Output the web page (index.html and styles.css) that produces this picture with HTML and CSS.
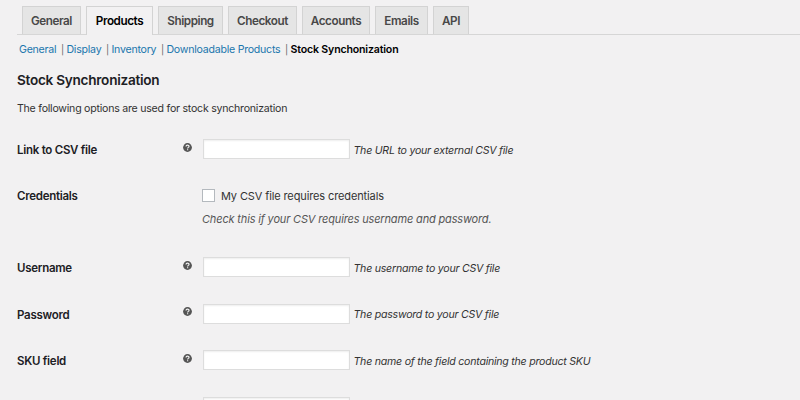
FILE: index.html
```html
<!DOCTYPE html>
<html lang="en">
<head>
<meta charset="utf-8">
<title>Stock Synchronization</title>
<link rel="stylesheet" href="styles.css">
</head>
<body>
<svg class="defs" width="0" height="0" aria-hidden="true">
  <symbol id="help" viewBox="0 0 9 9">
    <circle cx="4.5" cy="4.5" r="4.4" fill="#555"/>
    <path d="M3 3.5C3.1 1.7 6 1.7 6 3.4C6 4.4 4.6 4.4 4.6 5.5M4.6 6.2V7.3" fill="none" stroke="#f1f1f1" stroke-width="1.2"/>
  </symbol>
</svg>
<nav class="tabs">
  <a class="tab general">General</a>
  <a class="tab products active">Products</a>
  <a class="tab shipping">Shipping</a>
  <a class="tab checkout">Checkout</a>
  <a class="tab accounts">Accounts</a>
  <a class="tab emails">Emails</a>
  <a class="tab api">API</a>
</nav>
<main>
  <ul class="subnav">
    <li><a>General</a></li>
    <li><a>Display</a></li>
    <li><a>Inventory</a></li>
    <li><a>Downloadable Products</a></li>
    <li><a class="current">Stock Synchonization</a></li>
  </ul>
  <h2>Stock Synchronization</h2>
  <p class="intro">The following options are used for stock synchronization</p>
  <form class="fields">
    <div class="row">
      <label>Link to CSV file</label><svg class="help"><use href="#help"/></svg>
      <input type="text"><span class="description">The URL to your external CSV file</span>
    </div>
    <div class="row credentials">
      <label>Credentials</label>
      <div class="choice">
        <div class="check"><input type="checkbox"><span>My CSV file requires credentials</span></div>
        <p>Check this if your CSV requires username and password.</p>
      </div>
    </div>
    <div class="row">
      <label>Username</label><svg class="help"><use href="#help"/></svg>
      <input type="text"><span class="description">The username to your CSV file</span>
    </div>
    <div class="row">
      <label>Password</label><svg class="help"><use href="#help"/></svg>
      <input type="text"><span class="description">The password to your CSV file</span>
    </div>
    <div class="row">
      <label>SKU field</label><svg class="help"><use href="#help"/></svg>
      <input type="text"><span class="description">The name of the field containing the product SKU</span>
    </div>
    <div class="row">
      <label></label><span class="help"></span>
      <input type="text">
    </div>
  </form>
</main>
</body>
</html>
```
FILE: styles.css
```css
* { box-sizing: border-box; }
html, body { height: 100%; overflow: hidden; }
body {
  margin: 0;
  background: #f2f1f2;
  color: #333;
  font-family: Inter, "Open Sans", sans-serif;
  font-size: 10.6px;
  letter-spacing: -0.24px;
}
.defs { display: block; }
.tabs {
  display: flex;
  gap: 5px;
  height: 35px;
  margin-left: 17px;
  padding: 6px 0 0 5px;
  border-bottom: 1px solid #d6d6d6;
}
.tab {
  height: 28px;
  border: 1px solid #d3d3d3;
  border-bottom: 0;
  background: #e5e5e5;
  color: #484848;
  font-size: 11.7px;
  font-weight: 600;
  line-height: 28px;
  text-align: center;
  white-space: nowrap;
  letter-spacing: -0.43px;
}
.tab.active { height: 29px; background: #f2f1f2; color: #000; }
.general { width: 59px; }
.products { width: 67px; }
.shipping { width: 65px; }
.checkout { width: 69px; }
.accounts { width: 68px; }
.emails { width: 53px; }
.api { width: 36px; }
main { height: 365px; padding: 0 17px; overflow: hidden; }
.subnav {
  display: flex;
  height: 29px;
  margin: 0;
  padding: 0 0 0 2px;
  list-style: none;
  line-height: 29px;
  color: #666;
  white-space: nowrap;
}
.subnav li:not(:first-child)::before { content: "|"; margin: 0 2.5px 0 4.7px; font-size: 9.5px; }
.subnav a { color: #1a76ad; }
.subnav .current { color: #000; font-weight: 600; letter-spacing: -0.17px; }
h2 { margin: 6px 0 0; font-size: 13.6px; line-height: 20px; font-weight: 600; color: #1c2024; letter-spacing: -0.27px; }
.intro { margin: 11px 0 0; line-height: 16px; }
.fields { margin-top: 22px; }
.row { display: flex; align-items: center; height: 20.7px; margin-bottom: 26px; }
.row label { width: 166px; padding-top: 2px; font-size: 11.5px; font-weight: 600; color: #1c2024; letter-spacing: -0.27px; }
.help { width: 9px; height: 9px; margin: -4px 10.5px 0 0; }
input { margin: 0; appearance: none; background: #fff; }
input[type="text"] { width: 147.5px; height: 20px; border: 1px solid #ddd; box-shadow: inset 0 1px 2px rgba(0,0,0,.07); }
.description { margin-left: 3.5px; padding-top: 2px; font-style: italic; white-space: nowrap; }
.credentials { height: 45px; padding-top: 1px; align-items: flex-start; margin-bottom: 26px; }
.row.credentials label { width: 185px; padding-top: 0; line-height: 18px; }
.check { display: flex; align-items: center; height: 18px; gap: 6px; font-size: 11px; letter-spacing: -0.12px; }
input[type="checkbox"] { width: 13px; height: 13px; margin-top: -1px; border: 1px solid #b4b9be; }
.choice p { margin: 5px 0 0; line-height: 18px; font-size: 11px; letter-spacing: -0.16px; font-style: italic; color: #555; }
```
